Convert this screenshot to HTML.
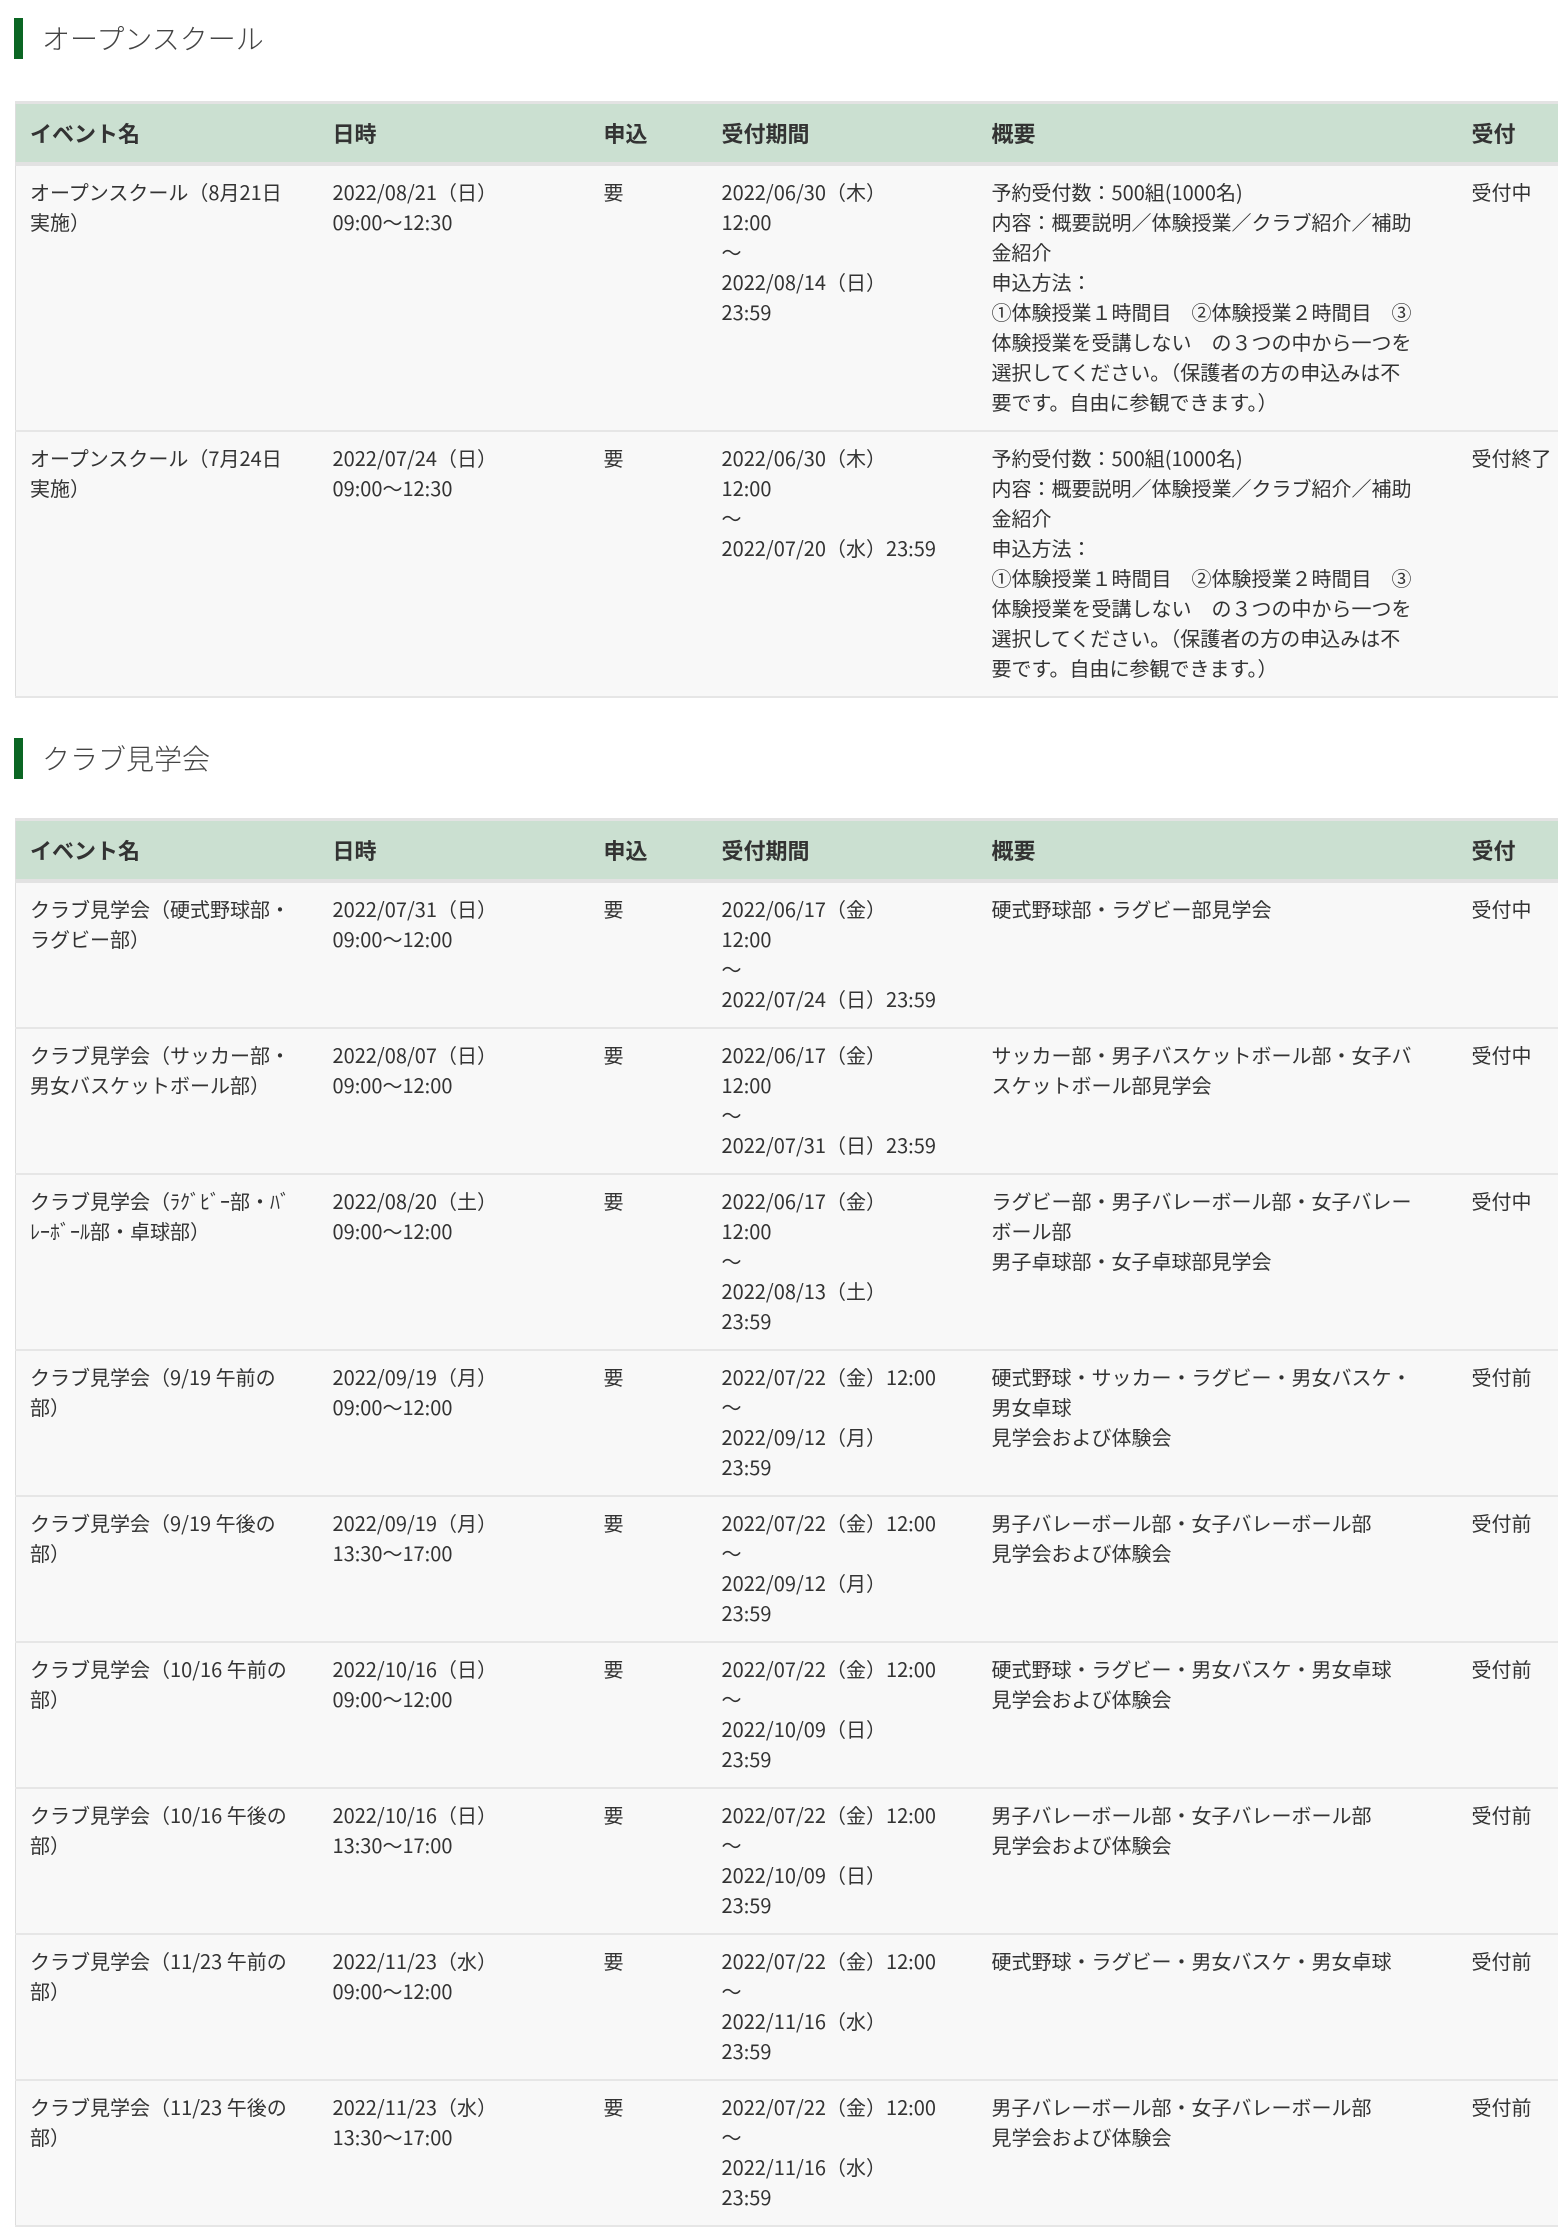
<!DOCTYPE html>
<html><head><meta charset="utf-8"><style>
body{margin:0;background:#fff;width:1558px;height:2234px;overflow:hidden;font-family:"Noto Sans CJK JP","Liberation Sans",sans-serif;color:#333}
h2{position:absolute;left:14px;margin:0;border-left:9px solid #0b6623;padding-left:19px;font-size:28px;font-weight:300;line-height:41px;height:41px;color:#444}
table{position:absolute;left:15px;width:1543px;border-collapse:collapse;table-layout:fixed;border-top:3px solid #e3e3e3;border-left:1px solid #ddd}
th{background:#cbe0d1;height:58px;text-align:left;font-size:22px;font-weight:bold;padding:0 0 0 14px;border-bottom:4px solid #e2e2e2;color:#333}
td{background:#f8f8f8;font-size:20px;line-height:30px;padding:11px 0 13px 14px;vertical-align:top;white-space:nowrap;border-bottom:2px solid #e6e6e6}
</style></head><body>
<h2 style="top:18px">オープンスクール</h2>
<table style="top:101px">
<colgroup><col style="width:303px"><col style="width:271px"><col style="width:118px"><col style="width:270px"><col style="width:480px"><col></colgroup>
<tr><th>イベント名</th><th>日時</th><th>申込</th><th>受付期間</th><th>概要</th><th>受付</th></tr>
<tr><td>オープンスクール（8月21日<br>実施）</td><td>2022/08/21（日）<br>09:00～12:30</td><td>要</td><td>2022/06/30（木）<br>12:00<br>～<br>2022/08/14（日）<br>23:59</td><td>予約受付数：500組(1000名)<br>内容：概要説明／体験授業／クラブ紹介／補助<br>金紹介<br>申込方法：<br>①体験授業１時間目　②体験授業２時間目　③<br>体験授業を受講しない　の３つの中から一つを<br>選択してください。（保護者の方の申込みは不<br>要です。自由に参観できます。）</td><td>受付中</td></tr>
<tr><td>オープンスクール（7月24日<br>実施）</td><td>2022/07/24（日）<br>09:00～12:30</td><td>要</td><td>2022/06/30（木）<br>12:00<br>～<br>2022/07/20（水）23:59</td><td>予約受付数：500組(1000名)<br>内容：概要説明／体験授業／クラブ紹介／補助<br>金紹介<br>申込方法：<br>①体験授業１時間目　②体験授業２時間目　③<br>体験授業を受講しない　の３つの中から一つを<br>選択してください。（保護者の方の申込みは不<br>要です。自由に参観できます。）</td><td>受付終了</td></tr>
</table>
<h2 style="top:738px">クラブ見学会</h2>
<table style="top:818px">
<colgroup><col style="width:303px"><col style="width:271px"><col style="width:118px"><col style="width:270px"><col style="width:480px"><col></colgroup>
<tr><th>イベント名</th><th>日時</th><th>申込</th><th>受付期間</th><th>概要</th><th>受付</th></tr>
<tr><td>クラブ見学会（硬式野球部・<br>ラグビー部）</td><td>2022/07/31（日）<br>09:00～12:00</td><td>要</td><td>2022/06/17（金）<br>12:00<br>～<br>2022/07/24（日）23:59</td><td>硬式野球部・ラグビー部見学会</td><td>受付中</td></tr>
<tr><td>クラブ見学会（サッカー部・<br>男女バスケットボール部）</td><td>2022/08/07（日）<br>09:00～12:00</td><td>要</td><td>2022/06/17（金）<br>12:00<br>～<br>2022/07/31（日）23:59</td><td>サッカー部・男子バスケットボール部・女子バ<br>スケットボール部見学会</td><td>受付中</td></tr>
<tr><td>クラブ見学会（ﾗｸﾞﾋﾞｰ部・ﾊﾞ<br>ﾚｰﾎﾞｰﾙ部・卓球部）</td><td>2022/08/20（土）<br>09:00～12:00</td><td>要</td><td>2022/06/17（金）<br>12:00<br>～<br>2022/08/13（土）<br>23:59</td><td>ラグビー部・男子バレーボール部・女子バレー<br>ボール部<br>男子卓球部・女子卓球部見学会</td><td>受付中</td></tr>
<tr><td>クラブ見学会（9/19 午前の<br>部）</td><td>2022/09/19（月）<br>09:00～12:00</td><td>要</td><td>2022/07/22（金）12:00<br>～<br>2022/09/12（月）<br>23:59</td><td>硬式野球・サッカー・ラグビー・男女バスケ・<br>男女卓球<br>見学会および体験会</td><td>受付前</td></tr>
<tr><td>クラブ見学会（9/19 午後の<br>部）</td><td>2022/09/19（月）<br>13:30～17:00</td><td>要</td><td>2022/07/22（金）12:00<br>～<br>2022/09/12（月）<br>23:59</td><td>男子バレーボール部・女子バレーボール部<br>見学会および体験会</td><td>受付前</td></tr>
<tr><td>クラブ見学会（10/16 午前の<br>部）</td><td>2022/10/16（日）<br>09:00～12:00</td><td>要</td><td>2022/07/22（金）12:00<br>～<br>2022/10/09（日）<br>23:59</td><td>硬式野球・ラグビー・男女バスケ・男女卓球<br>見学会および体験会</td><td>受付前</td></tr>
<tr><td>クラブ見学会（10/16 午後の<br>部）</td><td>2022/10/16（日）<br>13:30～17:00</td><td>要</td><td>2022/07/22（金）12:00<br>～<br>2022/10/09（日）<br>23:59</td><td>男子バレーボール部・女子バレーボール部<br>見学会および体験会</td><td>受付前</td></tr>
<tr><td>クラブ見学会（11/23 午前の<br>部）</td><td>2022/11/23（水）<br>09:00～12:00</td><td>要</td><td>2022/07/22（金）12:00<br>～<br>2022/11/16（水）<br>23:59</td><td>硬式野球・ラグビー・男女バスケ・男女卓球</td><td>受付前</td></tr>
<tr><td>クラブ見学会（11/23 午後の<br>部）</td><td>2022/11/23（水）<br>13:30～17:00</td><td>要</td><td>2022/07/22（金）12:00<br>～<br>2022/11/16（水）<br>23:59</td><td>男子バレーボール部・女子バレーボール部<br>見学会および体験会</td><td>受付前</td></tr>
</table>
</body></html>
